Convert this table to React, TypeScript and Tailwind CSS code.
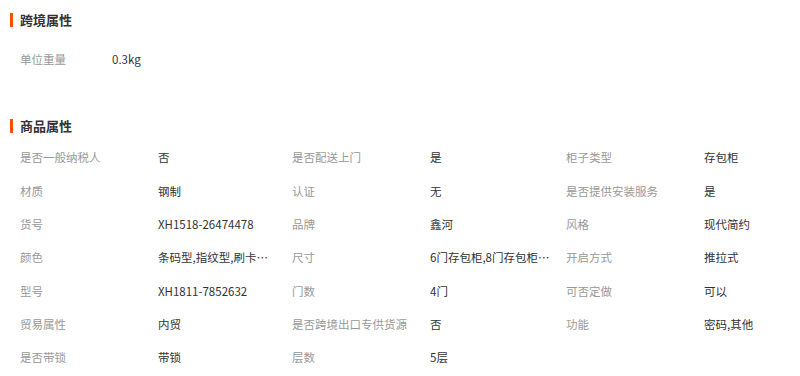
import React from 'react';

type Attr = { label: string; value: string };

const crossBorder: Attr[] = [{ label: '单位重量', value: '0.3kg' }];

const productAttrs: Attr[] = [
  { label: '是否一般纳税人', value: '否' },
  { label: '是否配送上门', value: '是' },
  { label: '柜子类型', value: '存包柜' },
  { label: '材质', value: '钢制' },
  { label: '认证', value: '无' },
  { label: '是否提供安装服务', value: '是' },
  { label: '货号', value: 'XH1518-26474478' },
  { label: '品牌', value: '鑫河' },
  { label: '风格', value: '现代简约' },
  { label: '颜色', value: '条码型,指纹型,刷卡型,密码型' },
  { label: '尺寸', value: '6门存包柜,8门存包柜,12门存包柜' },
  { label: '开启方式', value: '推拉式' },
  { label: '型号', value: 'XH1811-7852632' },
  { label: '门数', value: '4门' },
  { label: '可否定做', value: '可以' },
  { label: '贸易属性', value: '内贸' },
  { label: '是否跨境出口专供货源', value: '否' },
  { label: '功能', value: '密码,其他' },
  { label: '是否带锁', value: '带锁' },
  { label: '层数', value: '5层' },
];

// value column widths per grid column (left / middle / right)
const valueWidths = ['w-[112px]', 'w-[121px]', 'w-[90px]'];

const SectionTitle: React.FC<{ title: string }> = ({ title }) => (
  <div className="flex items-center h-4 pl-[10px]">
    <span className="w-[3px] h-[14px] bg-[#ff5000]" />
    <span className="ml-[7px] text-[13px] font-bold text-[#333] leading-4">{title}</span>
  </div>
);

const AttrCell: React.FC<{ attr: Attr; width: string }> = ({ attr, width }) => (
  <div className="flex items-center h-[33.33px] text-[11.5px]">
    <span className="w-[138px] shrink-0 text-[#999] whitespace-nowrap">{attr.label}</span>
    <span className={`${width} text-[#333] whitespace-nowrap overflow-hidden text-ellipsis`}>{attr.value}</span>
  </div>
);

export default function App() {
  return (
    <div
      className="w-[800px] h-[376px] bg-white overflow-hidden pt-[12px]"
      style={{ fontFamily: '"Noto Sans CJK SC", "Open Sans", sans-serif' }}
    >
      <SectionTitle title="跨境属性" />
      <div className="pl-[20px] mt-[15px]">
        {crossBorder.map((a) => (
          <div key={a.label} className="flex items-center h-[33.33px] text-[11.5px]">
            <span className="w-[92px] shrink-0 text-[#999]">{a.label}</span>
            <span className="text-[#333]">{a.value}</span>
          </div>
        ))}
      </div>
      <div className="mt-[42px]">
        <SectionTitle title="商品属性" />
      </div>
      <div className="pl-[20px] mt-[7px] grid grid-cols-[272px_274px_1fr]">
        {productAttrs.map((a, i) => (
          <AttrCell key={a.label} attr={a} width={valueWidths[i % 3]} />
        ))}
      </div>
    </div>
  );
}
